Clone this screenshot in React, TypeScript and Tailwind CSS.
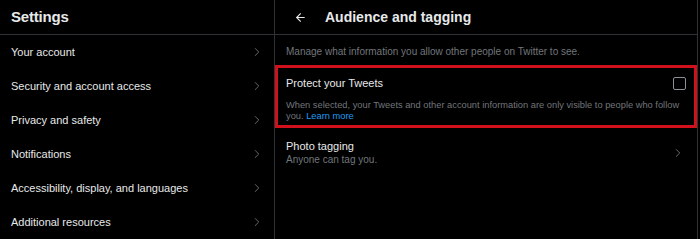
import { ChevronRight, ArrowLeft } from "lucide-react";

const items = [
  "Your account",
  "Security and account access",
  "Privacy and safety",
  "Notifications",
  "Accessibility, display, and languages",
  "Additional resources",
];

export default function App() {
  return (
    <div
      className="flex w-[700px] h-[239px] bg-black text-[#e7e9ea] overflow-hidden"
      style={{ fontFamily: '"Liberation Sans", Arial, sans-serif' }}
    >
      {/* left column */}
      <aside className="w-[275px] shrink-0 border-r border-[#2f3336]">
        <div className="h-[35px] flex items-center px-[11px] border-b border-[#2f3336]">
          <h1 className="text-[15px] font-bold tracking-[-0.2px]">Settings</h1>
        </div>
        {items.map((label) => (
          <div key={label} className="h-[34px] flex items-center justify-between pl-[11px] pr-[10px]">
            <span className="text-[11px]">{label}</span>
            <ChevronRight size={14} strokeWidth={1.5} className="text-[#71767b]" />
          </div>
        ))}
      </aside>

      {/* right column */}
      <main className="w-[423px] shrink-0 border-r border-[#2f3336]">
        <div className="h-[35px] flex items-center border-b border-[#2f3336]">
          <div className="w-[50px] flex justify-center">
            <ArrowLeft size={13} strokeWidth={2} />
          </div>
          <h2 className="text-[14px] font-bold">Audience and tagging</h2>
        </div>
        <p className="text-[10px] text-[#71767b] px-[11px] pt-[9px] pb-[6px]">
          Manage what information you allow other people on Twitter to see.
        </p>
        <div className="border-[3px] border-[#d0111b] h-[63px] px-[8px] pt-[7px]">
          <div className="flex items-center justify-between">
            <span className="text-[11px]">Protect your Tweets</span>
            <div className="w-[13px] h-[13px] border-[1.5px] border-[#8b9095] rounded-[2px]" />
          </div>
          <p className="text-[9.3px] leading-[11px] text-[#71767b] mt-[8px]">
            When selected, your Tweets and other account information are only visible to people who follow
            you. <span className="text-[#1d9bf0]">Learn more</span>
          </p>
        </div>
        <div className="flex items-center justify-between pl-[11px] pr-[12px] pt-[11px]">
          <div>
            <div className="text-[11px] leading-[15px]">Photo tagging</div>
            <div className="text-[10px] leading-[12px] text-[#71767b]">Anyone can tag you.</div>
          </div>
          <ChevronRight size={14} strokeWidth={1.5} className="text-[#71767b]" />
        </div>
      </main>
    </div>
  );
}
